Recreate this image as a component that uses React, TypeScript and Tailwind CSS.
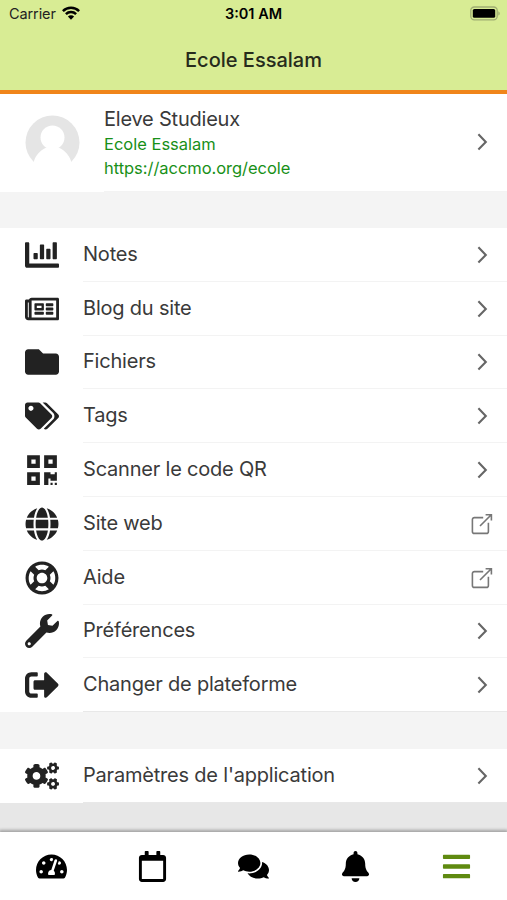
import React from 'react';
import {
  FaBars,
  FaBell,
  FaChartBar,
  FaCogs,
  FaComments,
  FaFolder,
  FaGlobe,
  FaQrcode,
  FaRegCalendar,
  FaRegLifeRing,
  FaRegNewspaper,
  FaSignOutAlt,
  FaTachometerAlt,
  FaTags,
  FaWrench,
} from 'react-icons/fa';
import type { IconType } from 'react-icons';

interface MenuItem {
  label: string;
  icon: IconType;
  external?: boolean;
}

const menuItems: MenuItem[] = [
  { label: 'Notes', icon: FaChartBar },
  { label: 'Blog du site', icon: FaRegNewspaper },
  { label: 'Fichiers', icon: FaFolder },
  { label: 'Tags', icon: FaTags },
  { label: 'Scanner le code QR', icon: FaQrcode },
  { label: 'Site web', icon: FaGlobe, external: true },
  { label: 'Aide', icon: FaRegLifeRing, external: true },
  { label: 'Préférences', icon: FaWrench },
  { label: 'Changer de plateforme', icon: FaSignOutAlt },
];

const settingsItem: MenuItem = { label: "Paramètres de l'application", icon: FaCogs };

function Chevron() {
  return (
    <svg className="w-[22px] h-[22px] shrink-0" viewBox="0 0 22 22" fill="none" stroke="#666" strokeWidth="2.1">
      <path d="M7.4 3.3 14.8 10.9 7.4 18.5" />
    </svg>
  );
}

function ExternalLink() {
  return (
    <svg className="w-[22px] h-[22px] shrink-0" viewBox="0 0 22 22" fill="none" stroke="#777" strokeWidth="1.6">
      <path d="M12.2 4.6H3.4A2 2 0 0 0 1.4 6.6V18.4A2 2 0 0 0 3.4 20.4H15.4A2 2 0 0 0 17.4 18.4V9.8" />
      <path d="M9 13 20 2M14.6 1.8H20.4V7.6" />
    </svg>
  );
}

function MenuRow({ item, last }: { item: MenuItem; last?: boolean }) {
  const Icon = item.icon;
  return (
    <div className="flex h-[53.8px] pl-[25px] bg-white">
      <div className="w-[58px] flex items-center">
        <Icon className="w-[34px] h-[34px] text-[#222]" />
      </div>
      <div className={`flex-1 flex items-center justify-between pr-3.5 border-b ${last ? 'border-[#e8e8e8]' : 'border-[#f3f3f3]'}`}>
        <span className="pb-px text-[20px] leading-6 text-[#3a3a3a] tracking-[-0.2px] whitespace-nowrap">{item.label}</span>
        <div className="pt-px">{item.external ? <ExternalLink /> : <Chevron />}</div>
      </div>
    </div>
  );
}

function StatusBar() {
  return (
    <div className="h-7 grid grid-cols-3 items-center px-[9px] text-[14.5px] text-[#222]">
      <div className="flex items-center gap-[6px]">
        <span className="tracking-[-0.1px]">Carrier</span>
        <svg className="w-[18px] h-[14px] -mt-0.5" viewBox="0 0 18 14" fill="none" stroke="#000" strokeWidth="2.5">
          <path d="M.9 5.1a11.5 11.5 0 0 1 16.2 0" />
          <path d="M3.9 8.2a7.2 7.2 0 0 1 10.2 0" />
          <path d="M9 13.8 5.9 10.5a4.4 4.4 0 0 1 6.2 0Z" fill="#000" stroke="none" />
        </svg>
      </div>
      <span className="text-center font-semibold text-black">3:01 AM</span>
      <svg className="w-[30px] h-[15px] justify-self-end -mr-0.5 -mt-0.5" viewBox="0 0 30 15">
        <rect x=".8" y="1" width="26.4" height="12.8" rx="3.5" fill="none" stroke="#9fad72" strokeWidth="1.3" />
        <rect x="2.8" y="3" width="22.4" height="8.8" rx="1.6" fill="#000" />
        <path d="M28.3 5.3c1.9.8 1.9 3.4 0 4.2Z" fill="#9fad72" />
      </svg>
    </div>
  );
}

function Profile() {
  return (
    <div className="flex h-[97.5px] shrink-0 bg-white pl-[25px]">
      <div className="w-[79px] flex items-center">
        <svg className="w-[55px] h-[55px]" viewBox="0 0 55 55">
          <circle cx="27.5" cy="27.5" r="27" fill="#e5e5e5" />
          <circle cx="27.5" cy="22.5" r="12" fill="#fff" />
          <path d="M5 55 9 46C11 40 15 35.5 20.5 33h14C40 35.5 44 40 46 46L50 55Z" fill="#fff" />
        </svg>
      </div>
      <div className="flex-1 flex items-center justify-between pr-3.5 border-b border-[#f3f3f3]">
        <div className="pt-0.5">
          <h2 className="text-[20px] leading-[26px] text-[#3a3a3a] tracking-[-0.22px]">Eleve Studieux</h2>
          <p className="text-[16.5px] leading-[24.5px] text-[#189018]">Ecole Essalam</p>
          <p className="text-[16.5px] leading-[24.5px] text-[#189018] tracking-[-0.04px]">https://accmo.org/ecole</p>
        </div>
        <Chevron />
      </div>
    </div>
  );
}

function TabBar() {
  return (
    <nav className="h-[68px] shrink-0 grid grid-cols-5 items-center justify-items-center pl-px bg-white text-black shadow-[0_-1px_3px_1px_rgba(0,0,0,0.3)]">
      <FaTachometerAlt className="w-[31px] h-[31px]" />
      <FaRegCalendar className="w-[31px] h-[31px]" />
      <FaComments className="w-[31px] h-[31px]" />
      <FaBell className="w-[31px] h-[31px]" />
      <FaBars className="w-[31px] h-[31px] text-[#5f8a10]" />
    </nav>
  );
}

export default function App() {
  return (
    <div className="w-[507px] h-[900px] flex flex-col overflow-hidden bg-[#e7e7e7] font-['Inter',sans-serif]">
      <header className="h-[94px] shrink-0 flex flex-col bg-[#d8ec94] border-b-4 border-[#f0851a]">
        <StatusBar />
        <h1 className="flex-1 flex items-center justify-center pt-px text-[20px] font-medium text-[#262b1c]">
          Ecole Essalam
        </h1>
      </header>

      <Profile />
      <div className="h-[36.5px] shrink-0 bg-[#f4f4f4]" />

      <div>
        {menuItems.map((item, i) => (
          <MenuRow key={item.label} item={item} last={i === menuItems.length - 1} />
        ))}
      </div>
      <div className="h-[37px] shrink-0 bg-[#f4f4f4]" />

      <MenuRow item={settingsItem} last />

      <div className="flex-1" />
      <TabBar />
    </div>
  );
}
